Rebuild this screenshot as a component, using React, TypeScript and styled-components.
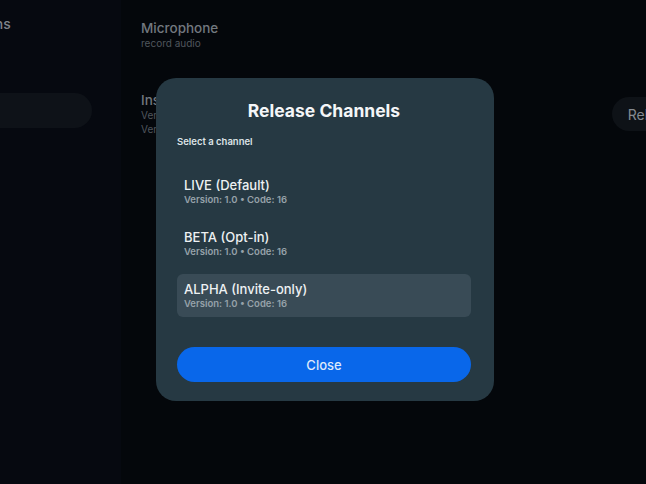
import React, { useState } from 'react';
import styled, { createGlobalStyle } from 'styled-components';

const GlobalStyle = createGlobalStyle`
  html, body {
    margin: 0;
    padding: 0;
    background: #05080c;
    font-family: Inter, "Noto Sans", "Liberation Sans", sans-serif;
    overflow: hidden;
  }
`;

const channels = [
  { id: 'live', name: 'LIVE (Default)', version: '1.0', code: 16 },
  { id: 'beta', name: 'BETA (Opt-in)', version: '1.0', code: 16 },
  { id: 'alpha', name: 'ALPHA (Invite-only)', version: '1.0', code: 16 },
];

const App = () => {
  const [selected, setSelected] = useState('alpha');

  return (
    <>
      <GlobalStyle />
      <Page>
        <Sidebar>
          <SidebarInner>
            <SidebarTitle>Permissions</SidebarTitle>
            <SidebarPill />
          </SidebarInner>
        </Sidebar>
        <Main>
          <Setting>
            <SettingText>
              <SettingName>Microphone</SettingName>
              <SettingHint>record audio</SettingHint>
            </SettingText>
          </Setting>
          <Setting>
            <SettingText>
              <SettingName>Installed</SettingName>
              <SettingHint>Version: 1.0</SettingHint>
              <SettingHint>Version code: 16</SettingHint>
            </SettingText>
            <GhostButton>Release channel</GhostButton>
          </Setting>
        </Main>

        <Dialog>
          <DialogTitle>Release Channels</DialogTitle>
          <Caption>Select a channel</Caption>
          <ChannelList>
            {channels.map((c) => (
              <Channel
                key={c.id}
                $active={selected === c.id}
                onClick={() => setSelected(c.id)}
              >
                <ChannelName>{c.name}</ChannelName>
                <ChannelMeta>
                  Version: {c.version} • Code: {c.code}
                </ChannelMeta>
              </Channel>
            ))}
          </ChannelList>
          <CloseButton>Close</CloseButton>
        </Dialog>
      </Page>
    </>
  );
};

export default App;

const Page = styled.div`
  position: relative;
  display: flex;
  width: 646px;
  height: 484px;
  background: #04070b;
  overflow: hidden;
`;

const Sidebar = styled.div`
  width: 121px;
  flex-shrink: 0;
  background: #060910;
  overflow: hidden;
`;

const SidebarInner = styled.div`
  margin-left: -71px;
  padding-top: 15px;
  display: flex;
  flex-direction: column;
`;

const SidebarTitle = styled.div`
  font-size: 14px;
  line-height: 18px;
  font-weight: 500;
  color: #80858c;
  white-space: nowrap;
`;

const SidebarPill = styled.div`
  margin-top: 60px;
  width: 163px;
  height: 35px;
  border-radius: 18px;
  background: #0e1218;
`;

const Main = styled.div`
  flex: 1;
  padding: 20px 0 0 20px;
  display: flex;
  flex-direction: column;
  gap: 42px;
`;

const Setting = styled.div`
  display: flex;
  align-items: center;
  justify-content: space-between;
`;

const SettingText = styled.div`
  display: flex;
  flex-direction: column;
`;

const SettingName = styled.div`
  font-size: 13.5px;
  line-height: 16px;
  font-weight: 500;
  color: #72787f;
`;

const SettingHint = styled.div`
  font-size: 10px;
  line-height: 14px;
  color: #50565d;
`;

const GhostButton = styled.button`
  margin-right: -106px;
  height: 34px;
  padding: 0 16px;
  border: none;
  border-radius: 17px;
  background: #0e1217;
  color: #858a91;
  font-family: inherit;
  font-size: 14px;
  white-space: nowrap;
`;

const Dialog = styled.div`
  position: absolute;
  left: 156px;
  top: 78px;
  width: 338px;
  box-sizing: border-box;
  padding: 22px 23px 19px 21px;
  border-radius: 20px;
  background: #263943;
  display: flex;
  flex-direction: column;
`;

const DialogTitle = styled.div`
  text-align: center;
  font-size: 17.5px;
  line-height: 22px;
  font-weight: 700;
  color: #f4f6f8;
`;

const Caption = styled.div`
  margin-top: 14px;
  font-size: 9.5px;
  line-height: 12px;
  font-weight: 600;
  color: #dde3e7;
`;

const ChannelList = styled.div`
  margin-top: 22px;
  display: flex;
  flex-direction: column;
  gap: 9px;
`;

const Channel = styled.div<{ $active: boolean }>`
  height: 43px;
  box-sizing: border-box;
  padding: 7px 7px 8px;
  border-radius: 6px;
  background: ${(p) => (p.$active ? '#394b56' : 'transparent')};
  display: flex;
  flex-direction: column;
  cursor: pointer;
`;

const ChannelName = styled.div`
  font-size: 13px;
  line-height: 16px;
  font-weight: 500;
  color: #eef1f3;
`;

const ChannelMeta = styled.div`
  font-size: 9.5px;
  line-height: 13px;
  font-weight: 600;
  color: #96a2aa;
`;

const CloseButton = styled.button`
  margin-top: 30px;
  height: 35px;
  border: none;
  border-radius: 18px;
  background: #0967ea;
  color: #dce9fa;
  font-family: inherit;
  font-size: 13px;
  font-weight: 500;
  cursor: pointer;
`;
